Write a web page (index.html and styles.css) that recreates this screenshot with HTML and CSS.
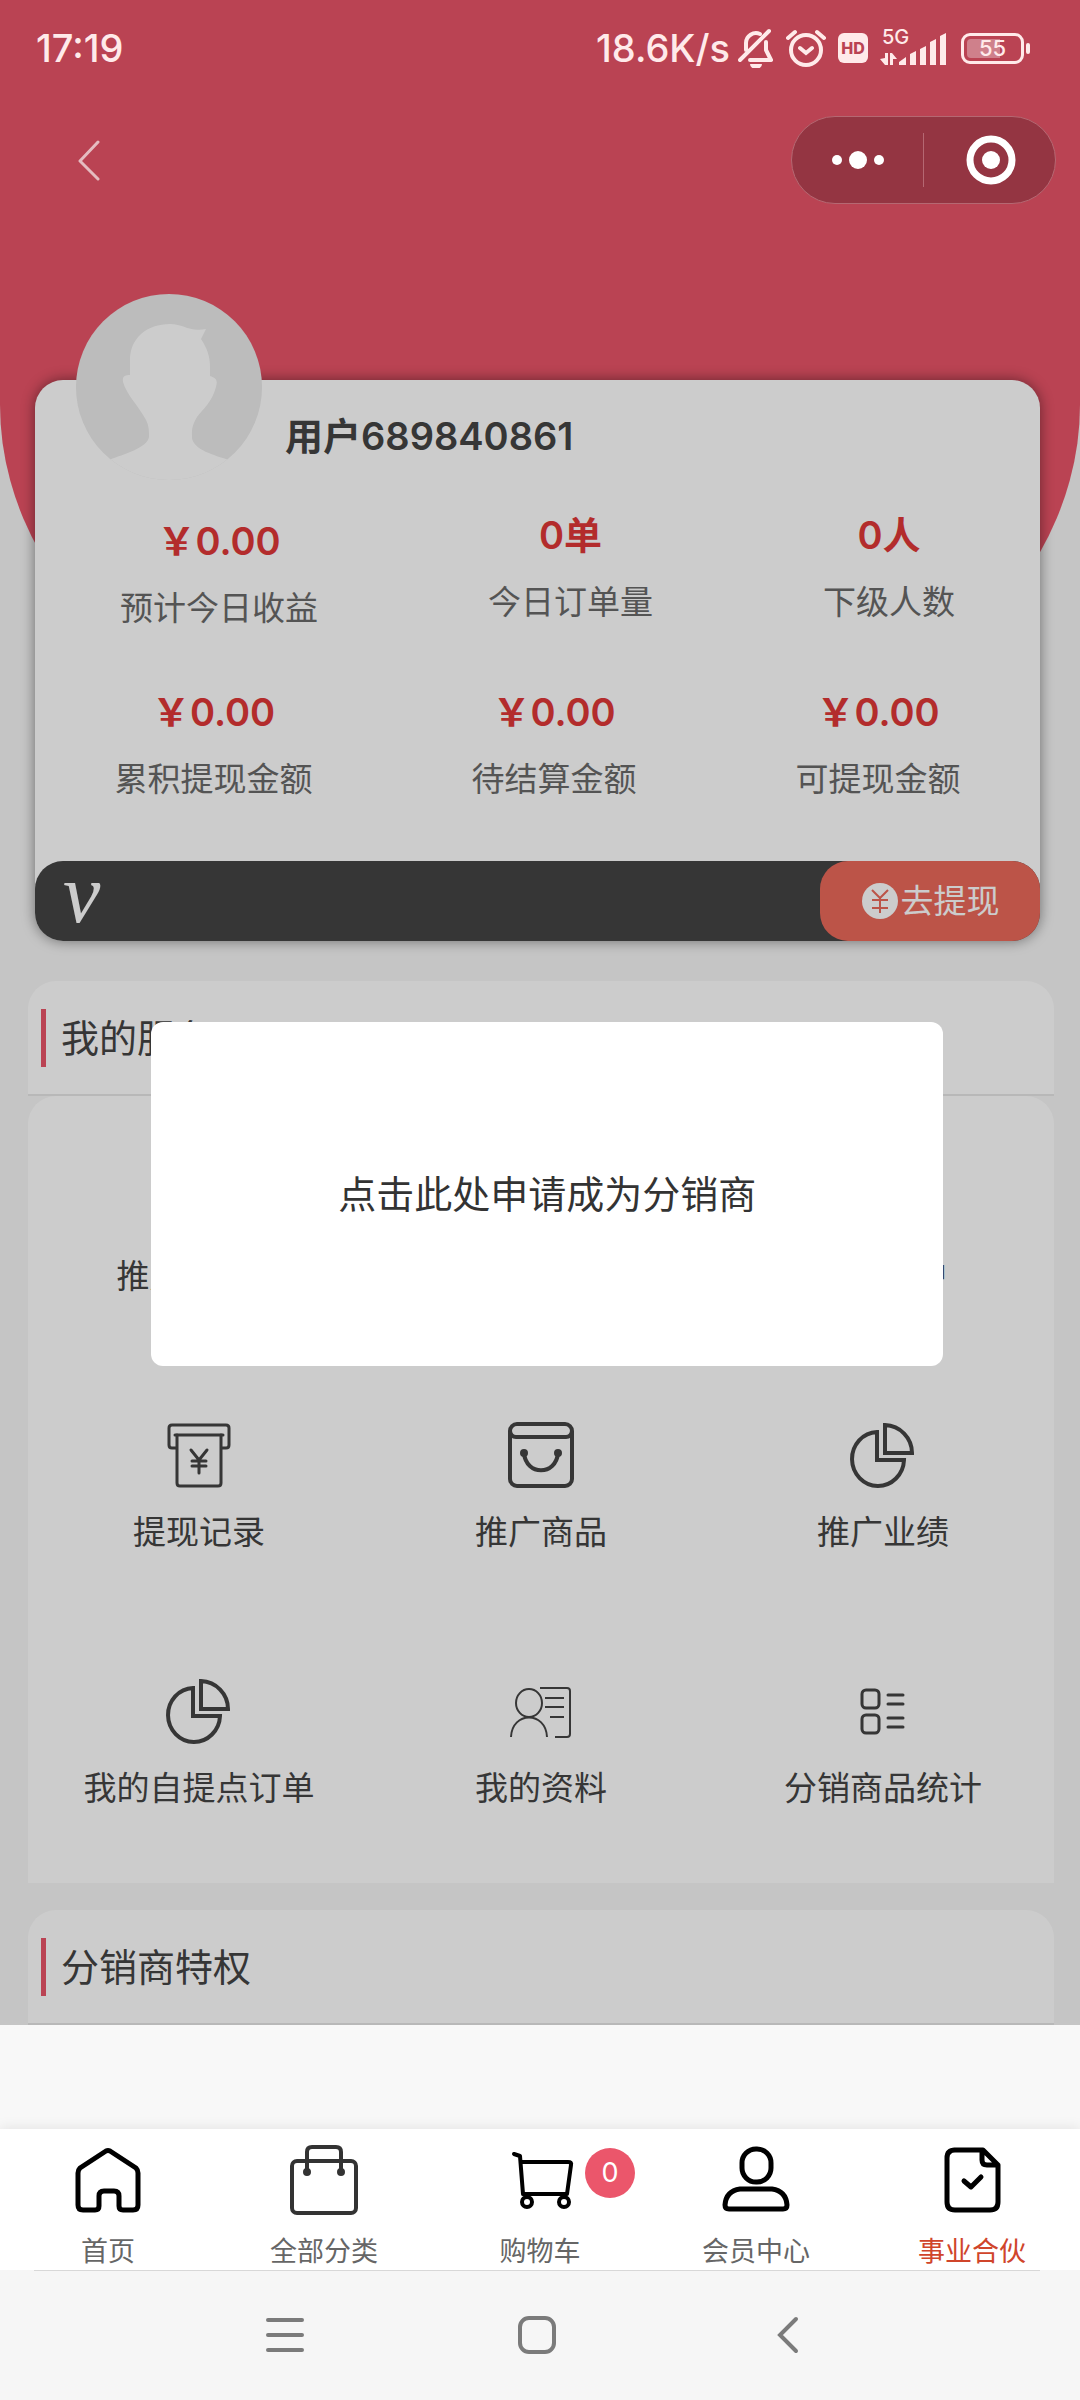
FILE: index.html
```html
<!DOCTYPE html>
<html lang="zh-CN">
<head>
<meta charset="utf-8">
<meta name="viewport" content="width=device-width, initial-scale=1">
<title>事业合伙</title>
<link rel="stylesheet" href="styles.css">
</head>
<body>
<div class="screen">
  <main class="page">
    <header class="status">
      <span class="status-text">17:19</span>
      <div class="status-right">
        <span class="status-text">18.6K/s</span>
        <svg class="bell" width="36" height="40" viewBox="0 0 36 40" fill="none" stroke="currentColor" stroke-width="4" stroke-linecap="round" stroke-linejoin="round"><path d="M8 22V15a10 10 0 0 1 14-9M28 14v8l5 10H12M2 32L31 3"/><path d="M12 36h12a6 5 0 0 1-12 0z" fill="currentColor" stroke="none"/></svg>
        <svg class="alarm" width="40" height="40" viewBox="0 0 40 40" fill="none" stroke="currentColor" stroke-width="4" stroke-linecap="round"><circle cx="20" cy="22" r="15"/><path d="M2 10l7-6M31 4l7 6M14 20l6 5 6-5"/></svg>
        <span class="hd">HD</span>
        <div class="signal">
          <span class="signal-label">5G</span>
          <svg width="68" height="38" viewBox="0 0 68 38" fill="currentColor"><path d="M0 30l5-1V24h3v12H5zM10 36V24h2l5 6h-4v6zM19 36v-3l7-5v8zM30 25l6-3v14h-6zM40 20l6-3v19h-6zM50 13l6-3v26h-6zM60 7l6-3v32h-6z"/></svg>
        </div>
        <div class="battery"><span class="battery-level">55</span></div>
      </div>
    </header>

    <nav class="topbar">
      <button class="back" type="button" aria-label="返回"><svg width="24" height="42" viewBox="0 0 24 42" fill="none" stroke="currentColor" stroke-width="3" stroke-linecap="round" stroke-linejoin="round"><path d="M21 3L3 22l18 18"/></svg></button>
      <div class="capsule">
        <button class="capsule-button" type="button" aria-label="更多"><svg width="52" height="20" viewBox="0 0 52 20" fill="currentColor"><circle cx="5" cy="10" r="5"/><circle cx="26" cy="10" r="9"/><circle cx="47" cy="10" r="5"/></svg></button>
        <button class="capsule-button" type="button" aria-label="关闭"><svg width="52" height="52" viewBox="0 0 52 52"><circle cx="27" cy="26" r="21" fill="none" stroke="currentColor" stroke-width="7"/><circle cx="27" cy="26" r="9" fill="currentColor"/></svg></button>
      </div>
    </nav>

    <section class="card">
      <div class="user">
        <svg class="avatar" viewBox="0 0 187 187"><defs><clipPath id="round"><circle cx="93" cy="93" r="93"/></clipPath></defs><g clip-path="url(#round)"><path fill="#ebebeb" d="M0 0h187v187H0z"/><path fill="#fff" d="M54 81V66c0-22 17-36 40-36 14 0 18 8 36 5l-5 10c6 9 9 17 9 28v9c6 2 8 4 6 11-4 15-13 22-19 30-6 10-5 15-5 21 2 12 22 17 37 22l-10 25H43l-10-25c15-6 38-12 40-23 0-6 0-11-3-17-6-12-20-26-23-38-1-6 2-7 7-7z"/></g></svg>
        <h1 class="user-name">用户689840861</h1>
      </div>
      <div class="stats">
        <div class="stat stat-money"><strong class="stat-value">￥0.00</strong><span class="stat-label">预计今日收益</span></div>
        <div class="stat"><strong class="stat-value">0单</strong><span class="stat-label">今日订单量</span></div>
        <div class="stat"><strong class="stat-value">0人</strong><span class="stat-label">下级人数</span></div>
      </div>
      <div class="stats">
        <div class="stat stat-money"><strong class="stat-value">￥0.00</strong><span class="stat-label">累积提现金额</span></div>
        <div class="stat stat-money"><strong class="stat-value">￥0.00</strong><span class="stat-label">待结算金额</span></div>
        <div class="stat stat-money"><strong class="stat-value">￥0.00</strong><span class="stat-label">可提现金额</span></div>
      </div>
      <div class="member-bar">
        <span class="member-mark">v</span>
        <button class="withdraw" type="button"><svg width="38" height="38" viewBox="0 0 38 38"><circle cx="19" cy="19" r="18" fill="currentColor"/><path d="M11 8l8 8 8-8M11 18h16M11 26h16M19 16v15" fill="none" stroke="#ec6a5b" stroke-width="2"/></svg>去提现</button>
      </div>
    </section>

    <section class="services">
      <h2 class="section-title">我的服务</h2>
      <div class="grid">
        <a class="service" href="#"><svg class="service-icon" viewBox="0 0 64 64" stroke-width="3"><path d="M6 6h20v20H6zM38 6h20v20H38zM6 38h20v20H6zM38 38h8v8M58 38v20H38"/></svg>推广二维码</a>
        <a class="service" href="#"><svg class="service-icon" viewBox="0 0 64 64" stroke-width="3"><path d="M12 4h40v56H12zM22 20h20M22 32h20M22 44h12"/></svg>分销订单</a>
        <a class="service" href="#"><svg class="service-icon" viewBox="0 0 64 64" stroke-width="3"><circle cx="32" cy="20" r="14"/><path d="M6 60c2-32 50-32 52 0"/></svg>我的客户</a>
        <a class="service" href="#"><svg class="service-icon" viewBox="0 0 64 64" stroke-width="3" stroke-linejoin="round" stroke-linecap="round"><path d="M9 25H5q-3 0-3-3V5q0-3 3-3h54q3 0 3 3v17q0 3-3 3h-4"/><path d="M8 12h48M24 27l8 10 8-10M25 38h14M25 43h14M32 38v12"/><path d="M10 12v48q0 3 3 3h38q3 0 3-3V12"/></svg>提现记录</a>
        <a class="service" href="#"><svg class="service-icon" viewBox="0 0 64 64" stroke-width="4"><rect x="1" y="1" width="62" height="62" rx="7"/><path d="M1 8q1 6 6 6h50q5 0 6-6M15 30c2 23 32 23 34 0"/><circle cx="15" cy="30" r="2"/><circle cx="49" cy="30" r="2"/></svg>推广商品</a>
        <a class="service" href="#"><svg class="service-icon" viewBox="0 0 64 64" stroke-width="4"><path d="M26 9A26 27 0 1 0 53 37H26zM34 2v28h27A28 28 0 0 0 34 2z"/></svg>推广业绩</a>
        <a class="service" href="#"><svg class="service-icon" viewBox="0 0 64 64" stroke-width="4"><path d="M26 9A26 27 0 1 0 53 37H26zM34 2v28h27A28 28 0 0 0 34 2z"/></svg>我的自提点订单</a>
        <a class="service" href="#"><svg class="service-icon" viewBox="0 0 64 64" stroke-width="2"><ellipse cx="20" cy="24" rx="13" ry="14"/><path d="M2 58c1-26 35-26 36 0M31 9h27q3 0 3 3v43q0 3-3 3H46M36 19h19M36 28h19M41 38h14"/></svg>我的资料</a>
        <a class="service" href="#"><svg class="service-icon" viewBox="0 0 64 64" stroke-width="3" stroke-linecap="round"><rect x="11" y="11" width="17" height="18" rx="4"/><rect x="11" y="36" width="17" height="18" rx="4"/><path d="M37 16h15M37 25h15M37 39h15M37 48h15"/></svg>分销商品统计</a>
      </div>
    </section>

    <section class="privileges">
      <h2 class="section-title">分销商特权</h2>
    </section>

    <div class="mask"></div>
    <div class="dialog" role="dialog"><button class="dialog-action" type="button">点击此处申请成为分销商</button></div>
  </main>

  <footer class="bottom">
    <nav class="tabs">
      <a class="tab" href="#"><svg class="tab-icon" viewBox="0 0 72 72" stroke-width="5" stroke-linejoin="round"><path d="M34 6q2-1 4 0l26 17q2 2 2 5v32q0 5-5 5H51q-4 0-4-4V51q0-5-5-5H32q-5 0-5 5v10q0 4-4 4H11q-5 0-5-5V28q0-3 2-5z"/></svg>首页</a>
      <a class="tab" href="#"><svg class="tab-icon tab-icon-soft" viewBox="0 0 72 72" stroke-width="4"><rect x="4" y="16" width="64" height="52" rx="5"/><path d="M19 27V7q0-5 5-5h24q5 0 5 5v20"/><circle cx="19" cy="27" r="2"/><circle cx="53" cy="27" r="2"/></svg>全部分类</a>
      <a class="tab" href="#"><svg class="tab-icon" viewBox="0 0 72 72" stroke-width="4" stroke-linejoin="round" stroke-linecap="round"><path d="M10 9l6 2 3 38h44M17 17h47q4 0 3 3l-4 29"/><circle cx="23" cy="57" r="5"/><circle cx="60" cy="57" r="5"/></svg>购物车<span class="badge">0</span></a>
      <a class="tab" href="#"><svg class="tab-icon" viewBox="0 0 72 72" stroke-width="5"><rect x="22" y="4" width="29" height="33" rx="14"/><path d="M20 44h32q14 2 15 16 0 4-4 4H9q-4 0-4-4 1-14 15-16z"/></svg>会员中心</a>
      <a class="tab tab-active" href="#"><svg class="tab-icon" viewBox="0 0 72 72" stroke-width="5" stroke-linejoin="round" stroke-linecap="round"><path d="M18 5h29l15 15v37q0 8-8 8H19q-8 0-8-8V13q0-8 8-8M46 6v9q0 5 5 5h11"/><path d="M28 36l7 6 10-10"/></svg>事业合伙</a>
    </nav>
    <nav class="system">
      <button class="system-button" type="button" aria-label="任务"><svg width="40" height="40" viewBox="0 0 40 40"><path d="M3 5h34M3 20h34M3 35h34"/></svg></button>
      <button class="system-button" type="button" aria-label="主屏幕"><svg width="40" height="40" viewBox="0 0 40 40"><rect x="3" y="3" width="34" height="34" rx="9"/></svg></button>
      <button class="system-button" type="button" aria-label="返回"><svg width="40" height="40" viewBox="0 0 40 40"><path d="M27 4L11 20l16 16"/></svg></button>
    </nav>
  </footer>
</div>
</body>
</html>
```

FILE: styles.css
```css
* { box-sizing: border-box; }

body {
  margin: 0;
  background: #f8f8f8;
  color: #444;
  font-family: Inter, "Noto Sans CJK SC", sans-serif;
  font-size: 33px;
  line-height: 44px;
}

h1, h2 { margin: 0; }
a { color: inherit; text-decoration: none; }
svg { display: block; flex: none; }
button {
  border: 0;
  padding: 0;
  background: none;
  color: inherit;
  font: inherit;
}

.screen {
  display: flex;
  flex-direction: column;
  min-height: 100vh;
}

.page {
  position: relative;
  isolation: isolate;
  background: #f7f7f7;
}

/* Rounded red backdrop behind the profile card */
.page::before {
  content: "";
  position: absolute;
  z-index: -1;
  inset: 0 0 auto;
  height: 795px;
  border-radius: 0 0 50% 50% / 0 0 390px 390px;
  background: #e95468;
}

.status {
  position: relative;
  z-index: 2;
  display: flex;
  align-items: center;
  justify-content: space-between;
  height: 96px;
  padding: 0 56px 0 36px;
  color: #ffeaea;
}
.status-text { font-size: 38px; font-weight: 500; }
.status-right { display: flex; align-items: center; }
.bell { margin-left: 8px; }
.alarm { margin-left: 12px; }
.hd {
  width: 30px;
  margin-left: 12px;
  border-radius: 6px;
  background: #ffeaea;
  color: #ba4353;
  font-size: 16px;
  font-weight: 800;
  line-height: 30px;
  text-align: center;
}
.signal {
  position: relative;
  margin-left: 12px;
}
.signal-label {
  position: absolute;
  top: -4px;
  left: 2px;
  font-size: 20px;
  font-weight: 500;
  line-height: 24px;
}
.battery {
  position: relative;
  width: 63px;
  height: 31px;
  margin-left: 13px;
  padding: 3px;
  border: 3px solid #ffeaea;
  border-radius: 9px;
}
.battery::after {
  content: "";
  position: absolute;
  top: 7px;
  right: -9px;
  width: 4px;
  height: 11px;
  border-radius: 2px;
  background: #ffeaea;
}
.battery-level {
  display: block;
  border-radius: 4px;
  background: linear-gradient(90deg, #cf808b 65%, transparent 65%);
  font-size: 22px;
  font-weight: 500;
  line-height: 19px;
  text-align: center;
}

.topbar {
  position: relative;
  z-index: 2;
  display: flex;
  align-items: center;
  justify-content: space-between;
  height: 128px;
  padding: 0 24px 0 77px;
}
.back { color: #e5bcc1; }
.capsule {
  display: flex;
  align-items: center;
  width: 265px;
  height: 88px;
  border: 1px solid #b56872;
  border-radius: 44px;
  background: #943542;
  color: #fff;
}
.capsule-button {
  display: flex;
  flex: 1;
  align-items: center;
  justify-content: center;
  height: 54px;
}
.capsule-button + .capsule-button { border-left: 1px solid #b56872; }

.card {
  margin: 156px 40px 0 35px;
  border-radius: 28px;
  background: #fff;
  box-shadow: 0 0 14px rgba(0, 0, 0, .45);
}
.user {
  display: flex;
  align-items: flex-start;
  gap: 22px;
  margin-bottom: 32px;
  padding-left: 41px;
}
.avatar {
  width: 187px;
  height: 187px;
  margin-top: -86px;
}
.user-name {
  margin-top: 28px;
  font-size: 38px;
  font-weight: 600;
  line-height: 56px;
}
.stats {
  display: flex;
  justify-content: space-around;
}
.stats + .stats { margin-top: 54px; }
.stat {
  display: flex;
  flex-direction: column;
  align-items: center;
  gap: 23px;
}
.stat-money { padding-top: 6px; }
.stat-value {
  color: #e03838;
  font-size: 38px;
  font-weight: 600;
}
.stat-label { color: #6a6a6a; }

.member-bar {
  display: flex;
  justify-content: space-between;
  height: 80px;
  margin-top: 60px;
  padding-left: 28px;
  border-radius: 28px;
  background: #444;
  color: #fff;
}
.member-mark {
  font-family: "Liberation Serif", serif;
  font-size: 84px;
  font-style: italic;
  line-height: 66px;
}
.withdraw {
  display: flex;
  align-items: center;
  justify-content: center;
  gap: 2px;
  width: 220px;
  border-radius: 28px;
  background: #ec6a5b;
}

.services { margin: 40px 26px 0 28px; }
.privileges { margin: 27px 26px 0 28px; }
.section-title {
  display: flex;
  align-items: center;
  gap: 15px;
  height: 115px;
  padding-left: 13px;
  border-bottom: 2px solid #e6e6e6;
  border-radius: 28px 28px 0 0;
  background: #fff;
  font-size: 38px;
  font-weight: 400;
}
.section-title::before {
  content: "";
  width: 5px;
  height: 58px;
  background: #e95468;
}
.grid {
  display: grid;
  grid-template-columns: repeat(3, 1fr);
  row-gap: 125px;
  padding: 71px 0 73px;
  border-radius: 28px 28px 0 0;
  background: #fff;
}
.service {
  display: flex;
  flex-direction: column;
  align-items: center;
  gap: 23px;
}
.service-icon {
  width: 64px;
  height: 64px;
  overflow: visible;
  fill: none;
  stroke: #444;
}

.mask {
  position: absolute;
  z-index: 1;
  inset: 0;
  background: rgba(0, 0, 0, .2);
}
.dialog {
  position: absolute;
  z-index: 3;
  top: 1022px;
  left: 14%;
  display: flex;
  align-items: center;
  justify-content: center;
  width: 73.33%;
  height: 344px;
  border-radius: 12px;
  background: #fff;
}
.dialog-action { color: #333; font-size: 38px; }

.bottom { margin-top: auto; }
.tabs {
  display: grid;
  grid-template-columns: repeat(5, 1fr);
  padding: 16px 0 2px;
  background: #fff;
  box-shadow: 0 -2px 12px rgba(0, 0, 0, .08);
}
.tab {
  position: relative;
  display: flex;
  flex-direction: column;
  align-items: center;
  gap: 19px;
  color: #666;
  font-size: 27px;
  line-height: 32px;
}
.tab-active { color: #d0452b; }
.tab-icon {
  width: 72px;
  height: 72px;
  fill: none;
  stroke: #000;
}
.tab-icon-soft { stroke: #333; }
.badge {
  position: absolute;
  top: 3px;
  left: calc(50% + 45px);
  width: 50px;
  border-radius: 50%;
  background: #eb566b;
  color: #fff;
  line-height: 50px;
  text-align: center;
}
.system {
  position: relative;
  display: flex;
  align-items: center;
  justify-content: center;
  gap: 212px;
  height: 130px;
  padding-right: 7px;
  background: #f6f6f6;
}
.system::before {
  content: "";
  position: absolute;
  inset: 0 40px auto 34px;
  height: 1px;
  background: #d8d8d8;
}
.system-button svg {
  fill: none;
  stroke: #7b7b7b;
  stroke-width: 4;
  stroke-linecap: round;
}
```
